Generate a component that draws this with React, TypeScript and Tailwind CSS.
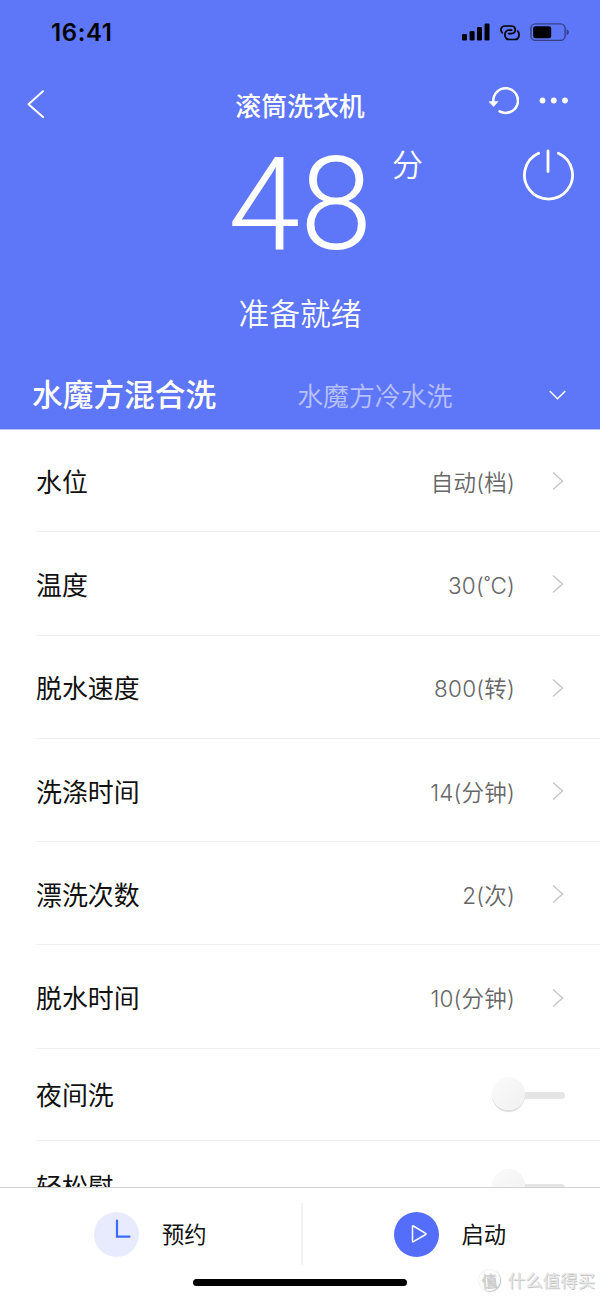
type Setting = { name: string; value: string };

const settings: Setting[] = [
  { name: "水位", value: "自动(档)" },
  { name: "温度", value: "30(˚C)" },
  { name: "脱水速度", value: "800(转)" },
  { name: "洗涤时间", value: "14(分钟)" },
  { name: "漂洗次数", value: "2(次)" },
  { name: "脱水时间", value: "10(分钟)" },
];

const switches = ["夜间洗", "轻松慰"];

function StatusBar() {
  return (
    <div className="flex h-16 items-center justify-between pl-[51px] pr-[30px] text-black">
      <span className="mt-0.5 font-['Inter',sans-serif] text-[24px] leading-none font-semibold tracking-[0.6px]">
        16:41
      </span>
      <div className="flex items-center">
        <svg className="h-[18px] w-7" viewBox="0 0 28 18" fill="currentColor">
          <rect x="0" y="11" width="5" height="6.5" rx="1.3" />
          <rect x="7.6" y="8" width="5" height="9.5" rx="1.3" />
          <rect x="15" y="4" width="5" height="13.5" rx="1.3" />
          <rect x="22.5" y="0.5" width="5" height="17" rx="1.3" />
        </svg>
        <svg className="ml-2.5 h-[18px] w-5" viewBox="0 0 20 18" fill="none" stroke="currentColor" strokeWidth="1.7" strokeLinecap="round">
          <path d="M2.3 9.8C0 7.5.6 3 5 3h6.200c5.200 0 5.600 7.600.2 7.600H8.600" />
          <path d="M17.700 8.200c2.300 2.300 1.700 8.300-2.700 8.300H9.200C3.700 16.500 3.500 7.200 8.800 7.200h2.800" />
        </svg>
        <svg className="ml-2.5 h-[18px] w-10" viewBox="0 0 40 18">
          <rect x="0.9" y="0.9" width="34.200" height="16.500" rx="4.500" fill="none" stroke="#000" strokeOpacity="0.45" strokeWidth="1.400" />
          <rect x="3.200" y="3.200" width="18" height="12" rx="2.300" />
          <path d="M36.600 6.200c3 1 3 5 0 6z" fillOpacity="0.45" />
        </svg>
      </div>
    </div>
  );
}

function NavBar() {
  return (
    <div className="grid h-[84px] grid-cols-[1fr_auto_1fr] items-center">
      <svg className="mb-1 ml-[26px] h-7 w-[19px]" viewBox="0 0 19 28" fill="none" stroke="currentColor" strokeWidth="2" strokeLinecap="round" strokeLinejoin="round">
        <path d="M17 1.200 2.500 14.200 17 27" />
      </svg>
      <h1 className="mb-0.5 text-[25.900px] leading-none font-medium">滚筒洗衣机</h1>
      <div className="mr-[31px] mb-2.5 flex items-center justify-end">
        <svg className="h-7 w-[30px]" viewBox="0 0 30 28" fill="none" stroke="currentColor" strokeWidth="2.500" strokeLinecap="round">
          <path d="M4.400 14.800a12.300 12.300 0 1 1 6.200 9.500" />
          <path d="M0 14.600h9l-4.300 4.800z" fill="currentColor" stroke="currentColor" strokeWidth="0.600" strokeLinejoin="round" />
        </svg>
        <svg className="mb-0.5 ml-5 h-[7px] w-[30px]" viewBox="0 0 30 7" fill="currentColor">
          <circle cx="3.500" cy="3.500" r="2.900" />
          <circle cx="14.800" cy="3.500" r="2.900" />
          <circle cx="26" cy="3.500" r="2.900" />
        </svg>
      </div>
    </div>
  );
}

function Countdown() {
  return (
    <div className="grid h-[142px] grid-cols-[1fr_auto_1fr]">
      <div />
      <div className="font-['Roboto',sans-serif] text-[130px] leading-[114px] font-light">48</div>
      <div className="flex justify-between pr-[25px]">
        <span className="ml-5 text-[31px] leading-[29px] font-[350]">分</span>
        <svg className="h-[54px] w-[54px]" viewBox="0 0 54 54" fill="none" stroke="currentColor" strokeWidth="2.800" strokeLinecap="round">
          <path d="M17.600 5.300a24 24 0 1 0 19.800 0" />
          <path d="M27 3v20.500" />
        </svg>
      </div>
    </div>
  );
}

function Chevron() {
  return (
    <svg className="ml-[37px] h-5 w-3" viewBox="0 0 12 20" fill="none" stroke="#c8c8cc" strokeWidth="1.500">
      <path d="M1 1.500 10.500 10 1 18.500" />
    </svg>
  );
}

function SettingRow({ name, value }: Setting) {
  return (
    <div className="ml-9 flex h-[103.300px] shrink-0 items-center border-b-[1.500px] border-[#f0f0f0] pt-0.5 pr-9">
      <span className="flex-1 text-[25.900px] text-[#111]">{name}</span>
      <span className="mt-[3px] font-['Inter','Noto_Sans_CJK_SC',sans-serif] text-[22.500px] font-[350] tracking-[0.2px] text-[#666]">
        {value}
      </span>
      <Chevron />
    </div>
  );
}

function SwitchRow({ name }: { name: string }) {
  return (
    <div className="ml-9 flex h-[92px] shrink-0 items-center border-b-[1.500px] border-[#f0f0f0] pt-px pr-[35px]">
      <span className="flex-1 text-[25.900px] text-[#111]">{name}</span>
      <div className="flex items-center">
        <div className="z-10 mb-0.5 h-[33px] w-[33px] rounded-full bg-linear-to-br from-[#fbfbfb] to-[#f0f0f0] shadow-[0_2px_1px_#dddddd]" />
        <div className="mt-0.5 -ml-1.5 h-[7px] w-[46px] rounded-full bg-[#e5e5e5]" />
      </div>
    </div>
  );
}

function BottomBar() {
  return (
    <div className="flex h-[111px] shrink-0 flex-col border-t border-[#d2d2d2] bg-white text-[22.300px] text-[#111]">
      <div className="mt-[15px] flex h-[62px] items-center">
        <div className="flex h-full flex-1 items-center border-r-2 border-[#f3f3f3] pl-[94px]">
          <svg className="mt-px h-[45px] w-[45px]" viewBox="0 0 45 45">
            <circle cx="22.500" cy="22.500" r="22.500" fill="#e8ebfe" />
            <path d="M23 8.500v16.200h12.500" fill="none" stroke="#3b6cfb" strokeWidth="2.200" strokeLinecap="round" />
          </svg>
          <span className="ml-[23px]">预约</span>
        </div>
        <div className="flex flex-1 items-center pl-[91px]">
          <svg className="mt-px h-[45px] w-[45px]" viewBox="0 0 45 45">
            <circle cx="22.500" cy="22.500" r="22.500" fill="#546efb" />
            <path d="M18.500 14.500v14.600q0 1 .9.500l12.200-7.100q.9-.6 0-1.200l-12.200-7.300q-.9-.5-.9.500z" fill="none" stroke="#fff" strokeWidth="1.500" />
          </svg>
          <span className="ml-[23px]">启动</span>
        </div>
      </div>
    </div>
  );
}

function Watermark() {
  return (
    <div className="absolute right-[5px] bottom-[7px] flex items-center text-[17.500px] leading-none text-[#e6e6e6] [text-shadow:1px_1px_0_#c8c8c8]">
      <span className="mr-2 flex h-[22px] w-[22px] -rotate-6 items-center justify-center rounded-full border border-[#f4f4f4] text-[16px] text-[#d0d0d0] shadow-[1px_1px_1px_#c4c4c4]">
        值
      </span>
      什么值得买
    </div>
  );
}

export default function App() {
  return (
    <div className="relative flex h-[1298px] w-[600px] flex-col overflow-hidden bg-white font-['Noto_Sans_CJK_SC',sans-serif]">
      <header className="h-[430px] shrink-0 border-b border-[#b9c4fb] bg-[#5e76f8] text-white">
        <StatusBar />
        <NavBar />
        <Countdown />
        <p className="text-center text-[30.700px] leading-[44px] font-[350]">准备就绪</p>
        <div className="mt-[34px] flex h-[50px] items-center pr-[34px] pl-8">
          <span className="text-[30.700px] leading-none font-medium">水魔方混合洗</span>
          <span className="mt-1 ml-[81px] flex-1 text-[25.900px] leading-none font-[350] text-white/55">
            水魔方冷水洗
          </span>
          <svg className="mt-1 h-2.5 w-[17px]" viewBox="0 0 17 10" fill="none" stroke="currentColor" strokeWidth="1.500">
            <path d="M.7 1 8.500 8.800 16.300 1" />
          </svg>
        </div>
      </header>
      <main className="-mt-px flex min-h-0 flex-1 flex-col overflow-hidden">
        {settings.map((item) => (
          <SettingRow key={item.name} {...item} />
        ))}
        {switches.map((name) => (
          <SwitchRow key={name} name={name} />
        ))}
      </main>
      <BottomBar />
      <div className="absolute bottom-3 left-[193px] h-[7px] w-[214px] rounded-full bg-black" />
      <Watermark />
    </div>
  );
}
